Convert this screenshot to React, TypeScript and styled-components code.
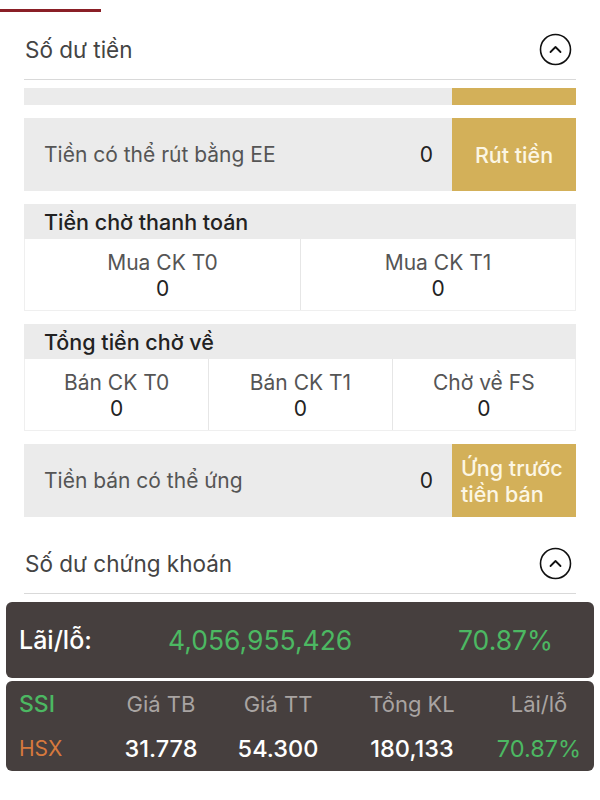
import styled, { createGlobalStyle } from 'styled-components';

const GlobalStyle = createGlobalStyle`
  html, body {
    margin: 0;
    padding: 0;
    background: #ffffff;
  }
  body {
    font-family: Inter, Roboto, "Liberation Sans", Arial, sans-serif;
    -webkit-font-smoothing: antialiased;
  }
`;

const colors = {
  gold: '#d3b059',
  rowGray: '#ebebeb',
  line: '#e6e6e6',
  text: '#555555',
  dark: '#222222',
  card: '#463f3e',
  green: '#4cb862',
  orange: '#d6793d',
  muted: '#a9a4a2',
};

const Page = styled.div`
  width: 600px;
  height: 800px;
  overflow: hidden;
  padding-top: 9px;
  box-sizing: border-box;
`;

const TabIndicator = styled.div`
  width: 101px;
  height: 3px;
  background: #8a1f26;
`;

const SectionHeader = styled.div<{ $top: number }>`
  margin: ${({ $top }) => $top}px 24px 0;
  height: 60px;
  display: flex;
  align-items: center;
  justify-content: space-between;
  border-bottom: 1px solid #d9d9d9;
  box-sizing: border-box;
  padding-bottom: 1px;
`;

const SectionTitle = styled.h2`
  margin: 0 0 0 1px;
  font-size: 22.5px;
  font-weight: 400;
  color: #444444;
`;

const CollapseIcon = () => (
  <svg width="33" height="33" viewBox="0 0 33 33" style={{ marginRight: 4 }}>
    <circle cx="16.5" cy="16.5" r="15" fill="none" stroke="#111" strokeWidth="1.6" />
    <path d="M11.5 19 L16.5 14 L21.5 19" fill="none" stroke="#111" strokeWidth="1.8" strokeLinecap="round" strokeLinejoin="round" />
  </svg>
);

const List = styled.div`
  margin: 8px 24px 0;
  display: flex;
  flex-direction: column;
  gap: 13px;
`;

const ActionRow = styled.div<{ $height: number }>`
  height: ${({ $height }) => $height}px;
  display: grid;
  grid-template-columns: 1fr auto 124px;
  background: ${colors.rowGray};
`;

const RowLabel = styled.div`
  display: flex;
  align-items: center;
  padding-left: 20px;
  font-size: 21px;
  color: ${colors.text};
`;

const RowValue = styled.div`
  display: flex;
  align-items: center;
  padding-right: 19px;
  font-size: 21px;
  color: ${colors.dark};
`;

const GoldButton = styled.button<{ $left?: boolean }>`
  border: none;
  margin: 0;
  background: ${colors.gold};
  color: #fcf6e4;
  font-family: inherit;
  font-size: 21.5px;
  font-weight: 500;
  line-height: 26px;
  display: flex;
  align-items: center;
  justify-content: ${({ $left }) => ($left ? 'flex-start' : 'center')};
  text-align: left;
  padding: 0 ${({ $left }) => ($left ? '9px' : '0')};
`;

const Group = styled.div`
  display: flex;
  flex-direction: column;
`;

const GroupHeader = styled.div`
  height: 35px;
  background: ${colors.rowGray};
  display: flex;
  align-items: center;
  padding-left: 20px;
  font-size: 21.5px;
  font-weight: 500;
  color: ${colors.dark};
`;

const Cells = styled.div<{ $cols: number }>`
  display: grid;
  grid-template-columns: repeat(${({ $cols }) => $cols}, 1fr);
  border: 1px solid #efefef;
  border-top: none;
`;

const Cell = styled.div`
  height: 71px;
  display: flex;
  flex-direction: column;
  align-items: center;
  justify-content: center;
  padding-top: 3px;
  box-sizing: border-box;
  line-height: 26px;
  & + & {
    border-left: 1px solid ${colors.line};
  }
`;

const CellLabel = styled.div`
  font-size: 21px;
  color: ${colors.text};
`;

const CellValue = styled.div`
  font-size: 21px;
  color: ${colors.dark};
`;

const Cards = styled.div`
  margin: 8px 6px 0;
  display: flex;
  flex-direction: column;
  gap: 3px;
`;

const Card = styled.div`
  background: ${colors.card};
  border-radius: 6px;
  padding: 0 13px;
`;

const TotalRow = styled.div`
  height: 76px;
  display: grid;
  grid-template-columns: 149px 290px 1fr;
  align-items: center;
  font-size: 26.5px;
`;

const TotalLabel = styled.div`
  color: #ffffff;
  font-weight: 500;
  font-size: 25px;
`;

const Green = styled.div`
  color: ${colors.green};
`;

const StockGrid = styled.div`
  height: 90px;
  display: grid;
  grid-template-columns: 81px 122px 112px 156px 98px;
  grid-template-rows: 45px 45px;
  align-items: center;
  box-sizing: border-box;
`;

const StockCell = styled.div<{ $color: string; $size: number; $bold?: boolean; $left?: boolean }>`
  color: ${({ $color }) => $color};
  font-size: ${({ $size }) => $size}px;
  font-weight: ${({ $bold }) => ($bold ? 500 : 400)};
  text-align: ${({ $left }) => ($left ? 'left' : 'center')};
  white-space: nowrap;
`;

export default function App() {
  return (
    <Page>
      <GlobalStyle />
      <TabIndicator />

      <SectionHeader $top={8}>
        <SectionTitle>Số dư tiền</SectionTitle>
        <CollapseIcon />
      </SectionHeader>

      <List>
        <ActionRow $height={17}>
          <div />
          <div />
          <GoldButton aria-hidden />
        </ActionRow>

        <ActionRow $height={73}>
          <RowLabel>Tiền có thể rút bằng EE</RowLabel>
          <RowValue>0</RowValue>
          <GoldButton>Rút tiền</GoldButton>
        </ActionRow>

        <Group>
          <GroupHeader>Tiền chờ thanh toán</GroupHeader>
          <Cells $cols={2}>
            <Cell>
              <CellLabel>Mua CK T0</CellLabel>
              <CellValue>0</CellValue>
            </Cell>
            <Cell>
              <CellLabel>Mua CK T1</CellLabel>
              <CellValue>0</CellValue>
            </Cell>
          </Cells>
        </Group>

        <Group>
          <GroupHeader>Tổng tiền chờ về</GroupHeader>
          <Cells $cols={3}>
            <Cell>
              <CellLabel>Bán CK T0</CellLabel>
              <CellValue>0</CellValue>
            </Cell>
            <Cell>
              <CellLabel>Bán CK T1</CellLabel>
              <CellValue>0</CellValue>
            </Cell>
            <Cell>
              <CellLabel>Chờ về FS</CellLabel>
              <CellValue>0</CellValue>
            </Cell>
          </Cells>
        </Group>

        <ActionRow $height={73}>
          <RowLabel>Tiền bán có thể ứng</RowLabel>
          <RowValue>0</RowValue>
          <GoldButton $left>
            Ứng trước
            <br />
            tiền bán
          </GoldButton>
        </ActionRow>
      </List>

      <SectionHeader $top={17}>
        <SectionTitle>Số dư chứng khoán</SectionTitle>
        <CollapseIcon />
      </SectionHeader>

      <Cards>
        <Card>
          <TotalRow>
            <TotalLabel>Lãi/lỗ:</TotalLabel>
            <Green>4,056,955,426</Green>
            <Green>70.87%</Green>
          </TotalRow>
        </Card>
        <Card>
          <StockGrid>
            <StockCell $color={colors.green} $size={23} $bold $left>SSI</StockCell>
            <StockCell $color={colors.muted} $size={22}>Giá TB</StockCell>
            <StockCell $color={colors.muted} $size={22}>Giá TT</StockCell>
            <StockCell $color={colors.muted} $size={22}>Tổng KL</StockCell>
            <StockCell $color={colors.muted} $size={22}>Lãi/lỗ</StockCell>
            <StockCell $color={colors.orange} $size={21} $left>HSX</StockCell>
            <StockCell $color="#ffffff" $size={23.5} $bold>31.778</StockCell>
            <StockCell $color="#ffffff" $size={23.5} $bold>54.300</StockCell>
            <StockCell $color="#ffffff" $size={23.5} $bold>180,133</StockCell>
            <StockCell $color={colors.green} $size={23.5}>70.87%</StockCell>
          </StockGrid>
        </Card>
      </Cards>
    </Page>
  );
}
